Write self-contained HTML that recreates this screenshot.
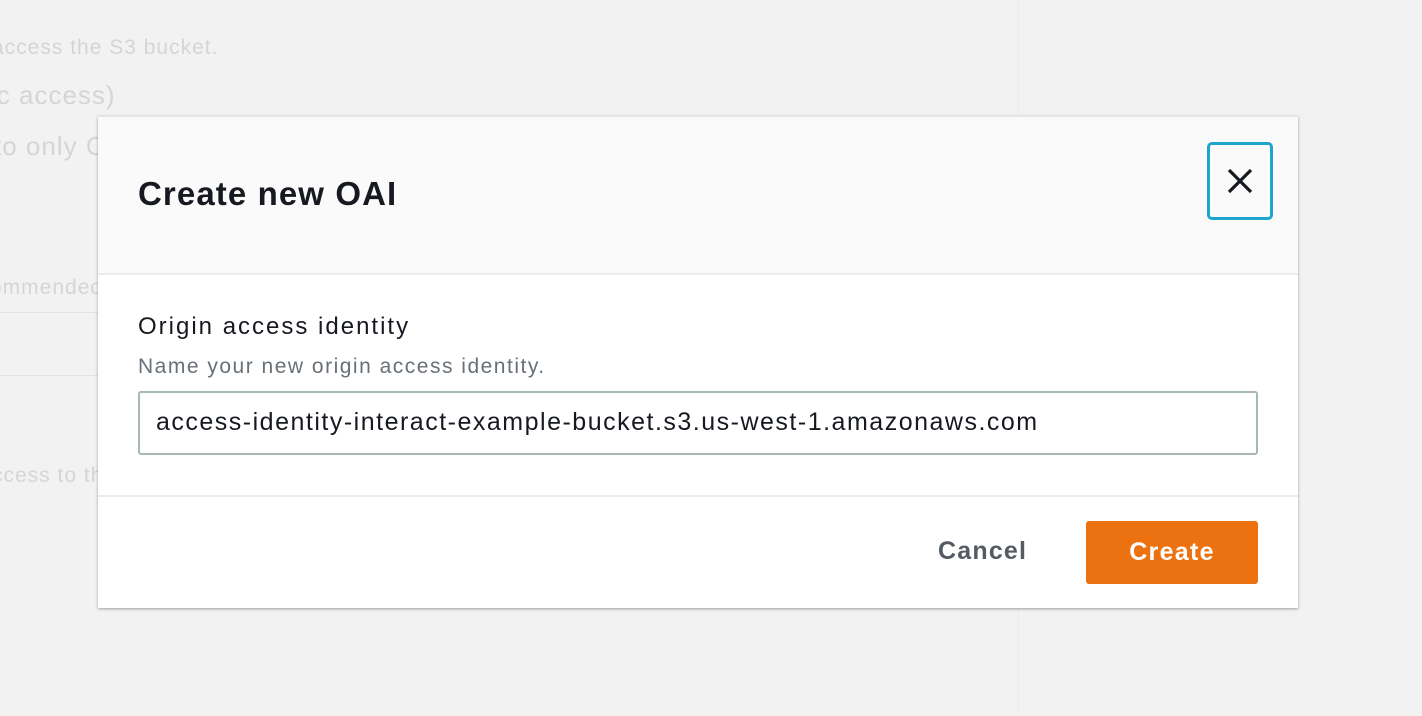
<!DOCTYPE html>
<html><head><style>
body{margin:0;width:1422px;height:716px;background:#f2f2f2;font-family:"Liberation Sans",sans-serif;position:relative;overflow:hidden}
.bg{position:absolute;color:#d5d5d5;white-space:nowrap;letter-spacing:1px}
.modal{position:absolute;left:98px;top:116px;width:1200px;height:491px;background:#fff;box-shadow:0 1px 3px rgba(0,0,0,.35);border-top:1px solid #e6e6e6}
.hdr{position:absolute;left:0;top:0;width:1200px;height:156px;background:#fafafa;border-bottom:2px solid #eaeded}
.ftr{position:absolute;left:0;top:378px;width:1200px;height:2px;background:#eaeded}
</style></head><body>
<div style="position:absolute;left:1018px;top:0;width:1px;height:716px;background:#ebebeb"></div>
<div class="bg" style="left:-8px;top:36px;font-size:21px">access the S3 bucket.</div>
<div class="bg" style="left:-10px;top:80px;font-size:26px">ic access)</div>
<div class="bg" style="left:-6px;top:131px;font-size:26px">to only CloudFront)</div>
<div class="bg" style="left:-10px;top:276px;font-size:21px">ommended</div>
<div style="position:absolute;left:0;top:312px;width:98px;height:1px;background:#e3e3e3"></div>
<div style="position:absolute;left:0;top:375px;width:98px;height:1px;background:#e3e3e3"></div>
<div class="bg" style="left:-8px;top:464px;font-size:21px">ccess to the</div>
<div class="modal">
 <div class="hdr">
  <div style="position:absolute;left:40px;top:58px;font-size:33px;font-weight:bold;color:#16191f;letter-spacing:1.1px">Create new OAI</div>
  <div style="position:absolute;left:1109px;top:25px;width:60px;height:72px;border:3px solid #1fa6cc;border-radius:5px;box-sizing:content-box">
   <svg width="60" height="72" viewBox="0 0 60 72"><path d="M19 25 L41 47 M41 25 L19 47" stroke="#16191f" stroke-width="3.2" fill="none"/></svg>
  </div>
 </div>
 <div style="position:absolute;left:40px;top:196px;font-size:24px;color:#16191f;letter-spacing:2px">Origin access identity</div>
 <div style="position:absolute;left:40px;top:238px;font-size:21px;color:#687078;letter-spacing:1.5px">Name your new origin access identity.</div>
 <div style="position:absolute;left:40px;top:274px;width:1116px;height:60px;border:2px solid #aab7b8;border-radius:3px;box-sizing:content-box">
  <div style="position:absolute;left:16px;top:15px;font-size:25px;color:#16191f;letter-spacing:1.5px">access-identity-interact-example-bucket.s3.us-west-1.amazonaws.com</div>
 </div>
 <div class="ftr"></div>
 <div style="position:absolute;left:840px;top:420px;font-size:25px;font-weight:bold;color:#545b64;letter-spacing:1.2px">Cancel</div>
 <div style="position:absolute;left:988px;top:404px;width:172px;height:63px;background:#ec7211;border-radius:3px;color:#fff;font-size:25px;font-weight:bold;text-align:center;line-height:63px;letter-spacing:1.3px">Create</div>
</div>
</body></html>
